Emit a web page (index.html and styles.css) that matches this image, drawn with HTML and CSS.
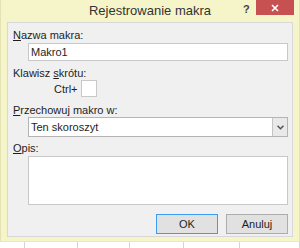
FILE: index.html
```html
<!DOCTYPE html>
<html lang="pl">
<head>
<meta charset="UTF-8">
<meta name="viewport" content="width=device-width, initial-scale=1.0">
<title>Rejestrowanie makra</title>
<link rel="stylesheet" href="styles.css">
</head>
<body>
<div class="dialog">
  <div class="titlebar">
    <span class="title">Rejestrowanie makra</span>
    <span class="help">?</span>
    <span class="close">
      <svg width="10" height="10" viewBox="0 0 10 10"><path d="M2 2 L8 8 M8 2 L2 8" stroke="#fff" stroke-width="1.6"/></svg>
    </span>
  </div>
  <div class="panel">
    <label class="label"><u>N</u>azwa makra:</label>
    <div class="field">Makro1</div>

    <label class="label label-gap">Klawisz <u>s</u>krótu:</label>
    <div class="shortcut">
      <span>Ctrl+</span>
      <div class="key"></div>
    </div>

    <label class="label label-gap2"><u>P</u>rzechowuj makro w:</label>
    <div class="select">
      <span class="select-text">Ten skoroszyt</span>
      <span class="select-btn">
        <svg width="7" height="5" viewBox="0 0 7 5"><path d="M0.5 0.8 L3.5 3.8 L6.5 0.8" fill="none" stroke="#555" stroke-width="1.5"/></svg>
      </span>
    </div>

    <label class="label label-gap3"><u>O</u>pis:</label>
    <div class="textarea"></div>

    <div class="buttons">
      <button class="btn btn-default">OK</button>
      <button class="btn">Anuluj</button>
    </div>
  </div>
</div>
<div class="sheet">
  <div class="cell" style="width: 25px"></div>
  <div class="cell" style="width: 53px"></div>
  <div class="cell" style="width: 52px"></div>
  <div class="cell" style="width: 54px"></div>
  <div class="cell" style="width: 56px"></div>
  <div class="cell" style="width: 60px"></div>
</div>
</body>
</html>
```

FILE: styles.css
```css
body {
  margin: 0;
  padding: 0;
  width: 300px;
  height: 248px;
  overflow: hidden;
  background-color: #fff;
  font-family: "Liberation Sans", Arial, sans-serif;
  font-size: 11px;
  color: #1e1e1e;
}

.dialog {
  box-sizing: border-box;
  width: 300px;
  height: 242px;
  padding: 0 6px 4px 6px;
  background-color: #f5f5c9;
  border-left: 1px solid #e2e2b4;
  border-right: 1px solid #e2e2b4;
  border-bottom: 1px solid #e8e8bc;
  display: flex;
  flex-direction: column;
}

.titlebar {
  height: 22px;
  position: relative;
  display: flex;
  justify-content: center;
}

.title {
  font-size: 13px;
  line-height: 22px;
  color: #333;
}

.help {
  position: absolute;
  left: 236px;
  top: 3px;
  font-size: 11px;
  font-weight: bold;
  color: #444;
}

.close {
  position: absolute;
  left: 249px;
  top: 0;
  width: 38px;
  height: 15px;
  background-color: #c75050;
  display: flex;
  align-items: center;
  justify-content: center;
}

.panel {
  flex: 1;
  background-color: #f0f0f0;
  border: 1px solid #d8d8d8;
  padding: 6px 4px 0 5px;
  display: flex;
  flex-direction: column;
}

.label {
  display: block;
  line-height: 13px;
}

.label-gap {
  margin-top: 6px;
}

.label-gap2 {
  margin-top: 7px;
}

.label-gap3 {
  margin-top: 5px;
}

.field {
  box-sizing: border-box;
  height: 18px;
  margin: 1px 0 0 15px;
  padding: 0 2px;
  line-height: 16px;
  background-color: #fff;
  border: 1px solid #c8c8c8;
}

.shortcut {
  display: flex;
  align-items: center;
  gap: 3px;
  margin-left: 41px;
}

.key {
  box-sizing: border-box;
  width: 16px;
  height: 17px;
  background-color: #fff;
  border: 1px solid #c8c8c8;
}

.select {
  box-sizing: border-box;
  height: 20px;
  margin: 0 0 0 15px;
  background-color: #fff;
  border: 1px solid #b4b4b4;
  display: flex;
}

.select-text {
  flex: 1;
  padding-left: 2px;
  line-height: 18px;
}

.select-btn {
  width: 14px;
  background-color: #e9e9e9;
  border-left: 1px solid #c4c4c4;
  display: flex;
  align-items: center;
  justify-content: center;
}

.textarea {
  box-sizing: border-box;
  height: 49px;
  margin: 1px 0 0 15px;
  background-color: #fff;
  border: 1px solid #c8c8c8;
}

.buttons {
  display: flex;
  justify-content: flex-end;
  gap: 8px;
  margin-top: 9px;
}

.btn {
  box-sizing: border-box;
  width: 62px;
  height: 20px;
  padding: 0;
  font-family: "Liberation Sans", Arial, sans-serif;
  font-size: 11px;
  color: #1e1e1e;
  background-color: #e1e1e1;
  border: 1px solid #adadad;
}

.btn-default {
  border-color: #3c9cf0;
}

.sheet {
  display: flex;
  height: 6px;
}

.cell {
  flex: none;
  box-sizing: border-box;
  height: 6px;
  border-right: 1px solid #d4d4d4;
}
```
